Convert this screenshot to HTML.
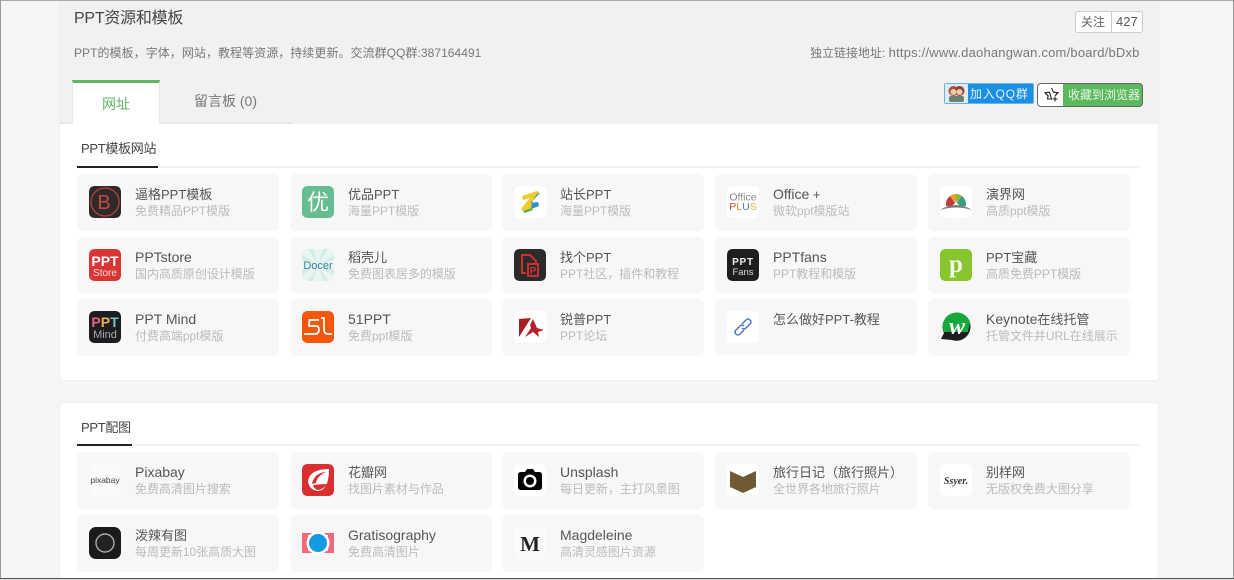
<!DOCTYPE html>
<html lang="zh"><head><meta charset="utf-8"><title>PPT资源和模板</title>
<style>
*{box-sizing:border-box}
html,body{margin:0;padding:0;width:1234px;height:580px;overflow:hidden;background:#f4f5f7;font-family:"Liberation Sans","Noto Sans CJK SC",sans-serif}
div,span,svg{position:absolute}
#w{left:0;top:0;width:1234px;height:580px;filter:blur(.3px)}
.c{width:202px;height:57px;background:#f7f7f7;border-radius:6px}
.c svg{left:12px;top:12px;width:32px;height:32px;border-radius:5px;background:#fff}
.t{left:58px;top:12px;line-height:18px;font-size:13px;color:#555;white-space:nowrap}
.t:has(.l){top:11px}
.s{left:58px;top:29px;line-height:16px;font-size:12px;color:#bbb;white-space:nowrap;letter-spacing:-.03px}
.l{font-size:14px;position:static!important}
.h{font-size:13px;color:#444;white-space:nowrap;line-height:18px;letter-spacing:-.3px}
</style></head><body><div id="w">
<div style="left:59px;top:0;width:1100px;height:381px;background:#fff;border:1px solid #eceef0;border-radius:0 0 4px 4px"></div>
<div style="left:59px;top:402px;width:1100px;height:178px;background:#fff;border:1px solid #eceef0;border-radius:4px"></div>
<div style="left:60px;top:1px;width:1098px;height:123px;background:#f1f1f1"></div>
<div style="left:74px;top:8px;font-size:16px;line-height:22px;color:#444;white-space:nowrap;letter-spacing:-.25px">PPT资源和模板</div>
<div style="left:74px;top:44px;font-size:12px;line-height:18px;color:#777;white-space:nowrap;letter-spacing:.05px">PPT的模板，字体，网站，教程等资源，持续更新。交流群QQ群:387164491</div>
<div style="left:810px;top:44px;font-size:12px;line-height:18px;color:#777;white-space:nowrap">独立链接地址: <span style="position:static;font-size:13px;letter-spacing:.2px">https://www.daohangwan.com/board/bDxb</span></div>
<div style="left:1075px;top:11px;width:68px;height:22px;background:#fff;border:1px solid #ccc;border-radius:3px"></div>
<div style="left:1111px;top:12px;width:1px;height:20px;background:#ccc"></div>
<div style="left:1081px;top:13px;font-size:12px;line-height:18px;color:#666">关注</div>
<div style="left:1116px;top:13px;font-size:13px;line-height:18px;color:#555">427</div>
<div style="left:944px;top:83px;width:90px;height:21px;background:#1a8fe3;border:1px solid #6cb2e6;border-radius:2px"></div>
<svg style="left:945px;top:84px" width="23" height="19" viewBox="0 0 23 19"><rect width="23" height="19" fill="#dcebf5"/><circle cx="8.500" cy="7" r="5" fill="#a8503a"/><circle cx="14.500" cy="7" r="5" fill="#8f4030"/><circle cx="8.500" cy="8" r="3" fill="#f2c9a8"/><circle cx="14.500" cy="8" r="3" fill="#f2c9a8"/><rect x="4" y="12" width="15" height="6" rx="2" fill="#6d7f6d"/></svg>
<div style="left:970px;top:85px;font-size:12px;line-height:18px;color:#e6f2fb;white-space:nowrap;letter-spacing:.8px">加入QQ群</div>
<div style="left:1037px;top:83px;width:106px;height:24px;background:#5cb85c;border:1px solid #666;border-radius:4px;overflow:hidden"><div style="left:0;top:0;width:25px;height:22px;background:#fff"></div></div>
<svg style="left:1043px;top:86px" width="17" height="17" viewBox="0 0 17 17" fill="none" stroke="#222" stroke-width="1.100"><path d="M8.500 2l2 4.200 4.500.6-3 3M8.500 13H4.500l.7-3.200L2 6.800l4.500-.6z"/><path d="M12 10.500v5M9.500 13h5"/></svg>
<div style="left:1068px;top:86px;font-size:12px;line-height:18px;color:#e8f5e8;white-space:nowrap">收藏到浏览器</div>
<div style="left:60px;top:122px;width:231px;height:2px;background:#e6e6e6"></div>
<div style="left:72px;top:80px;width:88px;height:44px;background:#fff;border-top:3px solid #5cb85c;border-left:1px solid #e8e8e8;border-right:1px solid #e8e8e8"></div>
<div style="left:102px;top:95px;font-size:14px;line-height:18px;color:#5cb85c">网址</div>
<div style="left:194px;top:92px;font-size:14px;line-height:18px;color:#777;white-space:nowrap">留言板 (0)</div>

<div style="left:77px;top:166px;width:1063px;height:2px;background:#f3f3f3"></div>
<div style="left:77px;top:166px;width:81px;height:2px;background:#222"></div>
<div class="h" style="left:81px;top:140px">PPT模板网站</div>
<div style="left:77px;top:444px;width:1063px;height:2px;background:#f3f3f3"></div>
<div style="left:77px;top:444px;width:55px;height:2px;background:#222"></div>
<div class="h" style="left:81px;top:419px">PPT配图</div>

<!-- row 1 -->
<div class="c" style="left:77px;top:174px"><svg viewBox="0 0 32 32"><rect width="32" height="32" rx="5" fill="#2e2a2a"/><circle cx="16" cy="16" r="14" fill="none" stroke="#b8423f" stroke-width="1.300"/><text x="15" y="23" font-size="20" text-anchor="middle" fill="#c24a45" font-family="Liberation Sans">B</text></svg><div class="t">逼格PPT模板</div><div class="s">免费精品PPT模版</div></div>
<div class="c" style="left:290px;top:174px"><svg viewBox="0 0 32 32"><rect width="32" height="32" rx="5" fill="#67bd92"/><text x="16" y="24" font-size="22" text-anchor="middle" fill="#fff" font-family="Noto Sans CJK SC">优</text></svg><div class="t">优品PPT</div><div class="s">海量PPT模版</div></div>
<div class="c" style="left:502px;top:174px"><svg viewBox="0 0 32 32"><rect width="32" height="32" rx="5" fill="#fff"/><path d="M8 10l15-5 3 2-10 10 8-1 1 4-15 6-3-3 9-11-7 2z" fill="#f2cb25"/><path d="M26 7L16 17l8-1 1 4-8 3 1-6 2-5 3-4z" fill="#2e8fc9"/><path d="M9 25l9-3 1 2-8 3z" fill="#57b04a"/></svg><div class="t">站长PPT</div><div class="s">海量PPT模版</div></div>
<div class="c" style="left:715px;top:174px"><svg viewBox="0 0 32 32"><rect width="32" height="32" rx="5" fill="#fff"/><text x="16" y="14.500" font-size="10.500" text-anchor="middle" fill="#888" font-family="Liberation Sans">Office</text><text x="16" y="24" font-size="10.500" text-anchor="middle" font-family="Liberation Sans"><tspan fill="#d9442e">P</tspan><tspan fill="#e08a2a">L</tspan><tspan fill="#3d80c9">U</tspan><tspan fill="#e8b62e">S</tspan></text></svg><div class="t"><span class="l">Office</span> +</div><div class="s">微软ppt模版站</div></div>
<div class="c" style="left:928px;top:174px"><svg viewBox="0 0 32 32"><rect width="32" height="32" rx="5" fill="#fff"/><path d="M6 20a11 11 0 0 1 4-10l5 7-3 3z" fill="#c23b3b"/><path d="M10 10a11 11 0 0 1 6-2v7l-1 2z" fill="#e8a32e"/><path d="M16 8a11 11 0 0 1 6 2l-5 7-1-2z" fill="#8cb53f"/><path d="M22 10a11 11 0 0 1 4 10l-6 0-3-3z" fill="#3c9a8a"/><path d="M0 24q16-10 32 0q-16-5-32 0z" fill="#777"/></svg><div class="t">演界网</div><div class="s">高质ppt模版</div></div>
<!-- row 2 -->
<div class="c" style="left:77px;top:237px;height:56px"><svg viewBox="0 0 32 32"><rect width="32" height="32" rx="5" fill="#d93535"/><text x="16" y="17" font-size="14" font-weight="700" text-anchor="middle" fill="#fff" font-family="Liberation Sans">PPT</text><text x="16" y="27" font-size="10" text-anchor="middle" fill="#fbdcdc" font-family="Liberation Sans">Store</text></svg><div class="t"><span class="l">PPTstore</span></div><div class="s">国内高质原创设计模版</div></div>
<div class="c" style="left:290px;top:237px;height:56px"><svg viewBox="0 0 32 32"><rect width="32" height="32" rx="5" fill="#e8f5f1"/><path d="M16 16L6 0h5zM16 16L21 0h5zM16 16L32 6v5zM16 16L32 21v5zM16 16L26 32h-5zM16 16L11 32H6zM16 16L0 26v-5zM16 16L0 11V6z" fill="#d3ece5"/><text x="16" y="20" font-size="11" text-anchor="middle" fill="#3a7fa3" font-family="Liberation Sans">Docer</text></svg><div class="t">稻壳儿</div><div class="s">免费图表居多的模版</div></div>
<div class="c" style="left:502px;top:237px;height:56px"><svg viewBox="0 0 32 32"><rect width="32" height="32" rx="5" fill="#2b2b2b"/><path d="M8 18V6h8l6 6v3M8 18v6h4" fill="none" stroke="#c9312e" stroke-width="2"/><path d="M14 15h10v12H14z" fill="none" stroke="#c9312e" stroke-width="2"/><text x="19" y="25" font-size="10" font-weight="700" text-anchor="middle" fill="#c9312e" font-family="Liberation Sans">P</text></svg><div class="t">找个PPT</div><div class="s">PPT社区，插件和教程</div></div>
<div class="c" style="left:715px;top:237px;height:56px"><svg viewBox="0 0 32 32"><rect width="32" height="32" rx="5" fill="#1e1e1e"/><text x="16" y="16" font-size="10" font-weight="700" text-anchor="middle" fill="#eee" letter-spacing=".8" font-family="Liberation Sans">PPT</text><text x="16" y="26" font-size="9.500" text-anchor="middle" fill="#ddd" font-family="Liberation Sans">Fans</text></svg><div class="t"><span class="l">PPTfans</span></div><div class="s">PPT教程和模版</div></div>
<div class="c" style="left:928px;top:237px;height:56px"><svg viewBox="0 0 32 32"><rect width="32" height="32" rx="5" fill="#86c52e"/><text x="16" y="23" font-size="25" font-weight="700" text-anchor="middle" fill="#f3f9e6" font-family="Liberation Serif">p</text></svg><div class="t">PPT宝藏</div><div class="s">高质免费PPT模版</div></div>
<!-- row 3 -->
<div class="c" style="left:77px;top:299px"><svg viewBox="0 0 32 32"><rect width="32" height="32" rx="5" fill="#1c1c22"/><text x="16" y="16" font-size="14" font-weight="700" text-anchor="middle" font-family="Liberation Sans"><tspan fill="#e8637a">P</tspan><tspan fill="#e8b44c">P</tspan><tspan fill="#6ccbc2">T</tspan></text><text x="16" y="27" font-size="11" text-anchor="middle" fill="#aaa" font-family="Liberation Sans">Mind</text></svg><div class="t"><span class="l">PPT Mind</span></div><div class="s">付费高端ppt模版</div></div>
<div class="c" style="left:290px;top:299px"><svg viewBox="0 0 32 32"><rect width="32" height="32" rx="5" fill="#f4560a"/><path d="M17 9H7.500L7 15h7q3 0 3 3.500T14 23H2M19 7h3v11q0 5 4 5h4" fill="none" stroke="#fff" stroke-width="1.800"/></svg><div class="t"><span class="l">51PPT</span></div><div class="s">免费ppt模版</div></div>
<div class="c" style="left:502px;top:299px"><svg viewBox="0 0 32 32"><rect width="32" height="32" rx="5" fill="#fff"/><path d="M5 8l12-1-12 19z" fill="#a51d24"/><path d="M19 8l4 9 7 2-6 2 1 5-6-5-8 5 6-9-1-3z" fill="#b3212a"/></svg><div class="t">锐普PPT</div><div class="s">PPT论坛</div></div>
<div class="c" style="left:715px;top:299px;height:56px"><svg viewBox="0 0 32 32"><rect width="32" height="32" rx="5" fill="#fff"/><g fill="none" stroke="#4b74c4" stroke-width="1.500"><path d="M15 13l4-4q2-2 4 0t0 4l-4 4q-2 2-4 0"/><path d="M17 19l-4 4q-2 2-4 0t0-4l4-4q2-2 4 0"/></g></svg><div class="t">怎么做好PPT-教程</div></div>
<div class="c" style="left:928px;top:299px"><svg viewBox="0 0 32 32" style="background:#f7f7f7"><path d="M1 28l3-6a14 14 0 1 1 8 7z" fill="#1e1e1e"/><path d="M3 13a14 14 0 0 1 27-2l-2 10H3z" fill="#16a83a"/><text x="17" y="23" font-size="24" font-weight="700" font-style="italic" text-anchor="middle" fill="#fff" font-family="Liberation Serif">w</text></svg><div class="t"><span class="l">Keynote</span>在线托管</div><div class="s">托管文件并URL在线展示</div></div>
<!-- section 2 -->
<div class="c" style="left:77px;top:452px"><svg viewBox="0 0 32 32"><rect width="32" height="32" rx="5" fill="#fafafa"/><text x="16" y="19" font-size="8.500" text-anchor="middle" fill="#444" font-family="Liberation Sans">pixabay</text></svg><div class="t"><span class="l">Pixabay</span></div><div class="s">免费高清图片搜索</div></div>
<div class="c" style="left:290px;top:452px"><svg viewBox="0 0 32 32"><rect width="32" height="32" rx="5" fill="#d9302f"/><path d="M27 5Q8 5 6 17q1 9 10 10 11-1 11-22z" fill="#fff"/><path d="M24 8q-12 1-14 12l4-1q1-7 10-11zM11 21q8-1 14-1-3 5-9 6-4-1-5-5z" fill="#d9302f"/></svg><div class="t">花瓣网</div><div class="s">找图片素材与作品</div></div>
<div class="c" style="left:502px;top:452px"><svg viewBox="0 0 32 32"><rect width="32" height="32" rx="5" fill="#fff"/><path d="M7 8h4l2-3h6l2 3h4q3 0 3 3v12q0 3-3 3H7q-3 0-3-3V11q0-3 3-3z" fill="#000"/><circle cx="16" cy="17" r="6.500" fill="#fff"/><circle cx="16" cy="17" r="4" fill="#000"/></svg><div class="t"><span class="l">Unsplash</span></div><div class="s">每日更新，主打风景图</div></div>
<div class="c" style="left:715px;top:452px"><svg viewBox="0 0 32 32"><rect width="32" height="32" rx="5" fill="#fff"/><path d="M3 7l13 6 13-6v16l-13 6-13-6z" fill="#6f5a33"/></svg><div class="t">旅行日记（旅行照片）</div><div class="s">全世界各地旅行照片</div></div>
<div class="c" style="left:928px;top:452px"><svg viewBox="0 0 32 32"><rect width="32" height="32" rx="5" fill="#fff"/><text x="16" y="20" font-size="10" font-weight="700" font-style="italic" text-anchor="middle" fill="#333" font-family="Liberation Serif">Ssyer.</text></svg><div class="t">别样网</div><div class="s">无版权免费大图分享</div></div>
<div class="c" style="left:77px;top:515px"><svg viewBox="0 0 32 32" style="background:#f7f7f7"><rect x="0" y="0" width="32" height="32" rx="7" fill="#1b1b1b"/><circle cx="16" cy="16" r="9" fill="#222" stroke="#aaa" stroke-width="1.400"/></svg><div class="t">泼辣有图</div><div class="s">每周更新10张高质大图</div></div>
<div class="c" style="left:290px;top:515px"><svg viewBox="0 0 32 32" style="background:#f7f7f7"><path d="M0 6h32v20H0z" fill="#ef6a7e"/><path d="M6 8h20v16H6z" fill="#f7f7f7"/><circle cx="16" cy="16" r="11.500" fill="#fff"/><circle cx="16" cy="16" r="9" fill="#129be2"/></svg><div class="t"><span class="l">Gratisography</span></div><div class="s">免费高清图片</div></div>
<div class="c" style="left:502px;top:515px"><svg viewBox="0 0 32 32"><rect width="32" height="32" rx="5" fill="#fafafa"/><text x="16" y="24" font-size="21" font-weight="700" text-anchor="middle" fill="#222" font-family="Liberation Serif">M</text></svg><div class="t"><span class="l">Magdeleine</span></div><div class="s">高清灵感图片资源</div></div>

<div style="left:0;top:0;width:1234px;height:1px;background:#aaa"></div>
<div style="left:0;top:0;width:1px;height:578px;background:#999"></div>
<div style="left:1233px;top:0;width:1px;height:578px;background:#999"></div>
<div style="left:0;top:578px;width:1234px;height:1px;background:#555"></div>
<div style="left:0;top:579px;width:1234px;height:1px;background:#ddd"></div>
</div></body></html>
